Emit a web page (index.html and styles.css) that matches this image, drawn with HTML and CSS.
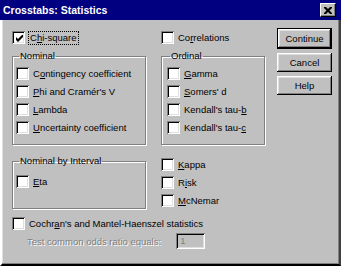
FILE: index.html
```html
<!DOCTYPE html>
<html>
<head>
    <title>Crosstabs: Statistics</title>
    <link rel="stylesheet" href="styles.css">
</head>
<body>
    <div class="window">
        <div class="titlebar">
            <span class="title">Crosstabs: Statistics</span>
            <span class="close">
                <svg width="8" height="7" viewBox="0 0 8 7"><path d="M0 0h2l2 2 2-2h2v1l-2.5 2.5 2.5 2.5v1h-2l-2-2-2 2h-2v-1l2.5-2.5-2.5-2.5z" fill="#000"/></svg>
            </span>
        </div>

        <div class="content">
            <div class="main">
                <div class="row">
                    <label class="chk"><span class="box checked"><svg width="7" height="7" viewBox="0 0 7 7"><path d="M0 2l2 2 5-5v3l-5 5-2-2z" fill="#000"/></svg></span><span class="focus">C<u>h</u>i-square</span></label>
                    <label class="chk"><span class="box"></span><span>Co<u>r</u>relations</span></label>
                </div>

                <div class="row">
                    <fieldset class="group nominal">
                        <legend>Nominal</legend>
                        <label class="chk item"><span class="box"></span><span>C<u>o</u>ntingency coefficient</span></label>
                        <label class="chk item"><span class="box"></span><span><u>P</u>hi and Cramér's V</span></label>
                        <label class="chk item"><span class="box"></span><span><u>L</u>ambda</span></label>
                        <label class="chk item"><span class="box"></span><span><u>U</u>ncertainty coefficient</span></label>
                    </fieldset>
                    <fieldset class="group ordinal">
                        <legend>Ordinal</legend>
                        <label class="chk item"><span class="box"></span><span><u>G</u>amma</span></label>
                        <label class="chk item"><span class="box"></span><span><u>S</u>omers' d</span></label>
                        <label class="chk item"><span class="box"></span><span>Kendall's tau-<u>b</u></span></label>
                        <label class="chk item"><span class="box"></span><span>Kendall's tau-<u>c</u></span></label>
                    </fieldset>
                </div>

                <div class="row mid">
                    <fieldset class="group interval">
                        <legend>Nominal by Interval</legend>
                        <label class="chk item"><span class="box"></span><span><u>E</u>ta</span></label>
                    </fieldset>
                    <div class="list">
                        <label class="chk item"><span class="box"></span><span><u>K</u>appa</span></label>
                        <label class="chk item"><span class="box"></span><span>R<u>i</u>sk</span></label>
                        <label class="chk item"><span class="box"></span><span><u>M</u>cNemar</span></label>
                    </div>
                </div>

                <label class="chk item cochran"><span class="box"></span><span>Cochr<u>a</u>n's and Mantel-Haenszel statistics</span></label>

                <div class="odds">
                    <span class="disabled">Test common odds ratio equals:</span>
                    <span class="field">1</span>
                </div>
            </div>

            <div class="buttons">
                <div class="btn default">Continue</div>
                <div class="btn">Cancel</div>
                <div class="btn">Help</div>
            </div>
        </div>
    </div>
</body>
</html>
```

FILE: styles.css
```css
body {
    margin: 0;
    background-color: #c0c0c0;
    font-family: "Liberation Sans", Arial, sans-serif;
    font-size: 9.5px;
    color: #000;
}

.window {
    width: 341px;
    height: 266px;
    display: flex;
    flex-direction: column;
    background-color: #c0c0c0;
}

.titlebar {
    height: 20px;
    flex: none;
    background-color: #000080;
    display: flex;
    align-items: center;
    justify-content: space-between;
    padding: 0 5px 0 3px;
}

.title {
    color: #fff;
    font-weight: bold;
    font-size: 10.5px;
}

.close {
    width: 14px;
    height: 12px;
    background-color: #c0c0c0;
    border: 1px solid;
    border-color: #fff #000 #000 #fff;
    box-shadow: inset -1px -1px #808080;
    display: flex;
    align-items: center;
    justify-content: center;
}

.content {
    flex: 1;
    display: flex;
    padding: 8px 0 0 10px;
    border-left: 2px solid #fff;
    border-right: 2px solid #404040;
    border-bottom: 2px solid #000;
    box-shadow: inset -1px -1px #808080, inset 1px 0 #dfdfdf;
}

.main {
    width: 253px;
    margin-top: 3px;
}

.row {
    display: grid;
    grid-template-columns: 134px 104px;
    column-gap: 15px;
}

.chk {
    display: flex;
    align-items: center;
    height: 13px;
    white-space: nowrap;
}

.chk.item {
    height: 18px;
}

.box {
    width: 13px;
    height: 13px;
    flex: none;
    margin-right: 4px;
    box-sizing: border-box;
    background-color: #fff;
    box-shadow: inset 1px 1px #808080, inset -1px -1px #fff, inset 2px 2px #000, inset -2px -2px #dfdfdf;
    display: flex;
    align-items: center;
    justify-content: center;
}

.box svg {
    margin: 1px 0 0 1px;
}

.focus {
    outline: 1px dotted #000;
    padding: 0 1px;
    line-height: 12px;
}

.group {
    margin: 6px 0 0;
    padding: 2px 0 8px 3px;
    border: 1px solid #808080;
    box-shadow: inset 1px 1px #fff, 1px 1px #fff;
}

.group legend {
    margin-left: 3px;
    padding: 0 1px;
    line-height: 12px;
}

.ordinal {
    padding-left: 5px;
}

.mid {
    margin-top: 10px;
}

.interval {
    margin: 0;
    padding: 5px 0 12px 3px;
}

.cochran {
    margin-top: 5px;
}

.odds {
    display: flex;
    align-items: center;
    gap: 15px;
    margin-top: 1px;
    padding-left: 15px;
}

.disabled {
    color: #808080;
    text-shadow: 1px 1px #fff;
}

.field {
    width: 29px;
    height: 16px;
    box-sizing: border-box;
    padding: 2px 4px;
    color: #808080;
    box-shadow: inset 1px 1px #808080, inset -1px -1px #fff, inset 2px 2px #000, inset -2px -2px #dfdfdf;
}

.buttons {
    margin-left: 12px;
    display: flex;
    flex-direction: column;
    gap: 4px;
}

.btn {
    width: 55px;
    height: 19px;
    box-sizing: border-box;
    display: flex;
    align-items: center;
    justify-content: center;
    box-shadow: inset -1px -1px #000, inset 1px 1px #fff, inset -2px -2px #808080, inset 2px 2px #dfdfdf;
}

.btn.default {
    height: 21px;
    border: 1px solid #000;
}
```
